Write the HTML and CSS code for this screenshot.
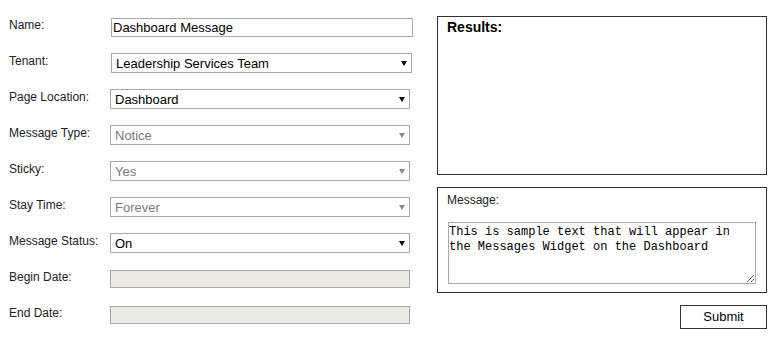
FILE: index.html
```html
<!DOCTYPE html>
<html lang="en">
<head>
    <meta charset="UTF-8">
    <meta name="viewport" content="width=device-width, initial-scale=1.0">
    <title>Dashboard Message</title>
    <link rel="stylesheet" href="styles.css">
</head>
<body>
<div class="page">
    <form class="message-form">
        <div class="row">
            <label>Name:</label>
            <input type="text" class="field field-name" value="Dashboard Message">
        </div>
        <div class="row">
            <label>Tenant:</label>
            <div class="select select-tenant">
                <select class="field"><option>Leadership Services Team</option></select>
                <span class="arrow"></span>
            </div>
        </div>
        <div class="row">
            <label>Page Location:</label>
            <div class="select">
                <select class="field"><option>Dashboard</option></select>
                <span class="arrow"></span>
            </div>
        </div>
        <div class="row">
            <label>Message Type:</label>
            <div class="select disabled">
                <select class="field" disabled><option>Notice</option></select>
                <span class="arrow"></span>
            </div>
        </div>
        <div class="row">
            <label>Sticky:</label>
            <div class="select disabled">
                <select class="field" disabled><option>Yes</option></select>
                <span class="arrow"></span>
            </div>
        </div>
        <div class="row">
            <label>Stay Time:</label>
            <div class="select disabled">
                <select class="field" disabled><option>Forever</option></select>
                <span class="arrow"></span>
            </div>
        </div>
        <div class="row">
            <label>Message Status:</label>
            <div class="select">
                <select class="field"><option>On</option></select>
                <span class="arrow"></span>
            </div>
        </div>
        <div class="row">
            <label>Begin Date:</label>
            <input type="text" class="field field-date" disabled>
        </div>
        <div class="row">
            <label>End Date:</label>
            <input type="text" class="field field-date" disabled>
        </div>
    </form>

    <div class="side">
        <div class="results">
            <h2>Results:</h2>
        </div>
        <div class="message-box">
            <label>Message:</label>
            <textarea>This is sample text that will appear in the Messages Widget on the Dashboard</textarea>
        </div>
        <div class="actions">
            <button type="button" class="submit-btn">Submit</button>
        </div>
    </div>
</div>
</body>
</html>
```

FILE: styles.css
```css
/* Общие стили */
body { margin: 0; padding: 0; background-color: #fff; font-family: "Liberation Sans", Arial, sans-serif; color: #222; }

.page {
    display: flex;
    align-items: flex-start;
    padding: 16px 8px;
}

/* Форма слева */
.message-form {
    width: 404px;
    padding-top: 1px;
}

.row {
    display: grid;
    grid-template-columns: 103px 1fr;
    align-items: start;
    height: 36px;
}

.row label {
    font-size: 12px;
    padding-top: 1px;
    padding-left: 1px;
}

.field {
    box-sizing: border-box;
    font-family: "Liberation Sans", Arial, sans-serif;
    font-size: 13px;
    color: #000;
    background-color: #fff;
    border: 1px solid #a9a9a9;
    border-radius: 0;
    margin: 0;
    outline: none;
}

.field-name {
    width: 302px;
    height: 19px;
    margin-top: 1px;
    padding: 0 1px;
}

.field-date {
    width: 300px;
    height: 18px;
    margin-top: 1px;
    margin-left: -1px;
    background-color: #ebebe4;
}

/* Выпадающие списки */
.select {
    position: relative;
    width: 300px;
    height: 20px;
    margin-left: -1px;
}

.select-tenant {
    width: 301px;
    margin-left: 0;
}

.select select {
    -webkit-appearance: none;
    appearance: none;
    width: 100%;
    height: 100%;
    padding: 0 0 0 4px;
}

.select .arrow {
    position: absolute;
    right: 5px;
    top: 8px;
    width: 0;
    height: 0;
    border-left: 3px solid transparent;
    border-right: 3px solid transparent;
    border-top: 5px solid #000;
}

.select.disabled select {
    color: #7a7a7a;
    opacity: 1;
}

.select.disabled .arrow {
    border-top-color: #8a8a8a;
}

/* Правая колонка */
.side {
    width: 331px;
    margin-left: 25px;
}

.results {
    box-sizing: border-box;
    height: 159px;
    border: 1px solid #333;
    padding: 2px 9px;
}

.results h2 {
    margin: 0;
    font-size: 14px;
    font-weight: bold;
    color: #000;
}

.message-box {
    box-sizing: border-box;
    height: 106px;
    margin-top: 12px;
    border: 1px solid #333;
    padding: 5px 10px 8px 10px;
}

.message-box label {
    display: block;
    font-size: 12px;
    margin-left: -1px;
}

.message-box textarea {
    display: block;
    box-sizing: border-box;
    width: 100%;
    height: 62px;
    margin-top: 15px;
    border: 1px solid #a9a9a9;
    padding: 2px 0;
    font-family: "Liberation Mono", "DejaVu Sans Mono", monospace;
    font-size: 12px;
    line-height: 15px;
    color: #000;
    outline: none;
}

.actions {
    display: flex;
    justify-content: flex-end;
    margin-top: 12px;
}

.submit-btn {
    box-sizing: border-box;
    width: 87px;
    height: 24px;
    padding: 0 0 2px 0;
    border: 1px solid #333;
    border-radius: 0;
    background-color: #fff;
    font-family: "Liberation Sans", Arial, sans-serif;
    font-size: 13px;
    color: #000;
    cursor: pointer;
}
```
